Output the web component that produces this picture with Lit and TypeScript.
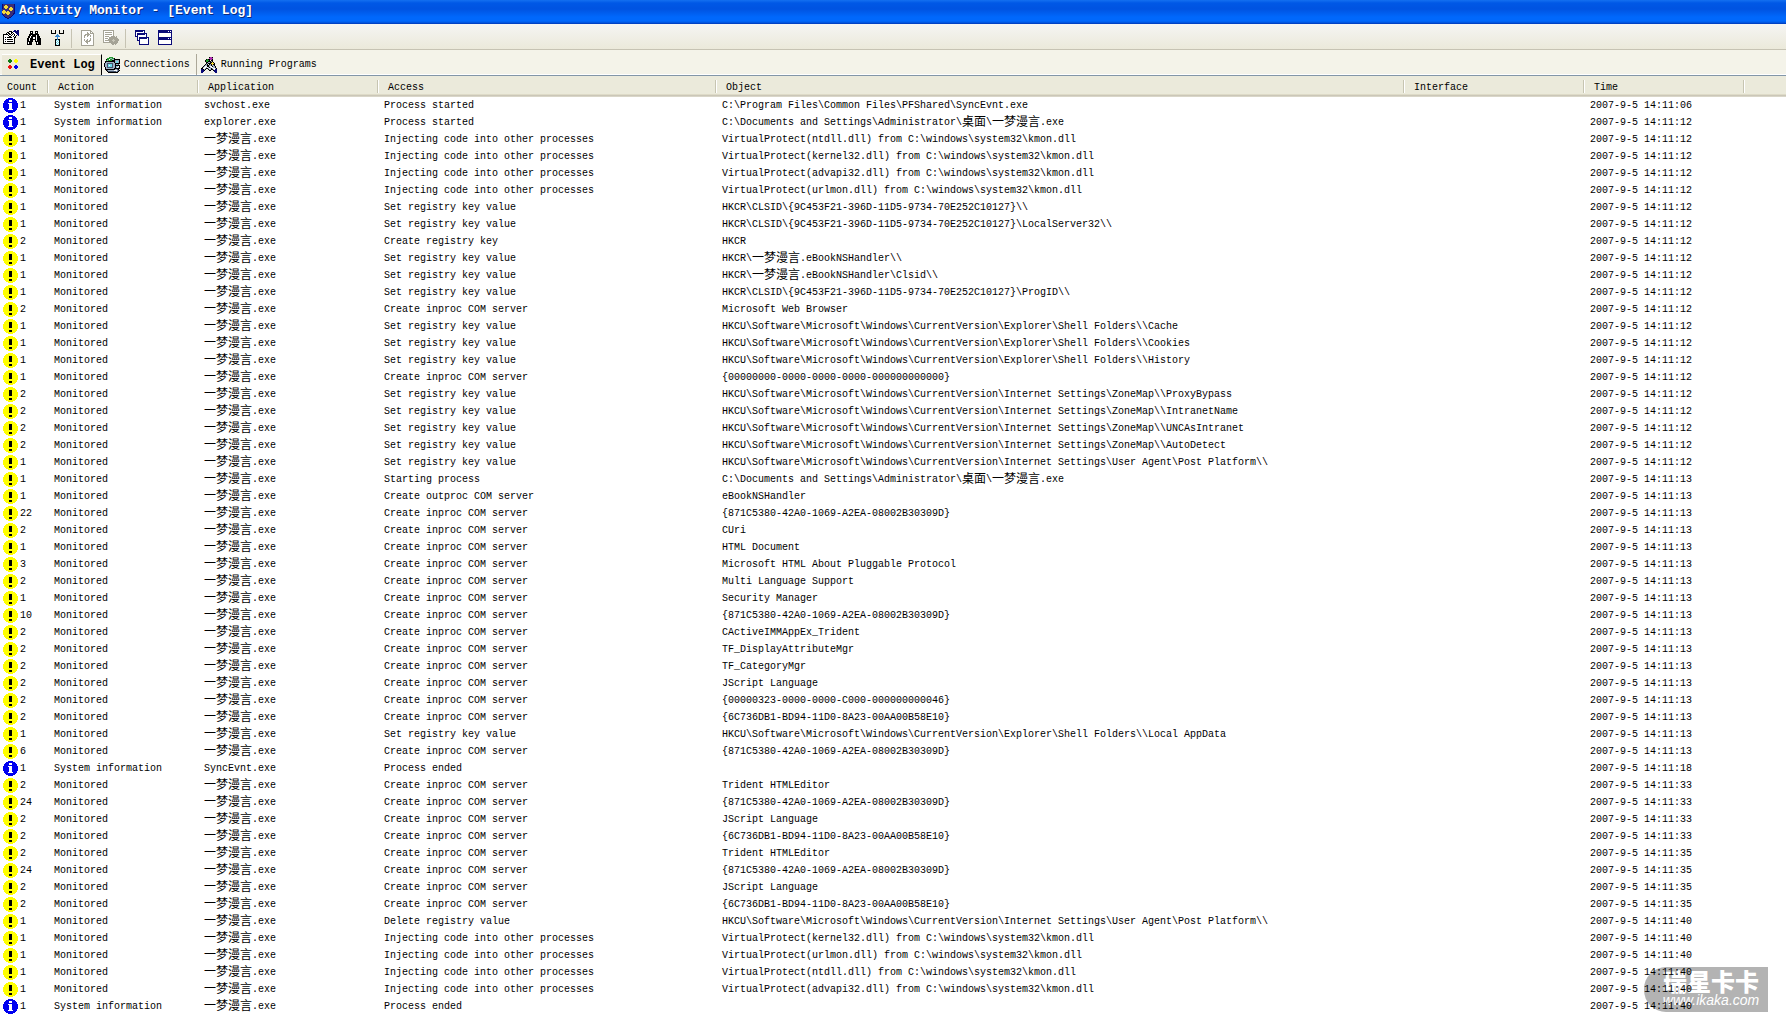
import { LitElement, html, svg, css } from "lit";
import { customElement, property, state } from "lit/decorators.js";

const PALETTE: Record<string, string> = {
  K: "#000000",
  N: "#0a0a78",
  B: "#3a8ad0",
  C: "#6fdcec",
  W: "#ffffff",
  G: "#a5a396",
  L: "#c9c7ba",
  Y: "#f4d838",
  P: "#3a2e78",
  E: "#1f9a2c",
  M: "#b02fb0",
  S: "#9fb0c4",
  D: "#44546c",
  R: "#f01010",
  U: "#0000f0",
  A: "#ffff00",
  F: "#0e7a12",
};

const ICONS: Record<string, string[]> = {
  shield: [
    "................",
    ".NPPPPPPPPPPPN..",
    ".NPPYYPPPPPPPN..",
    ".NPYYYYPPPPPPN..",
    ".NPYYYYPPYYPPN..",
    ".NPPYYPPYYYYPN..",
    ".PPPPPPPYYYYPN..",
    ".PYYPPPPPYYPPN..",
    ".YYYYPYYPPPPPN..",
    ".YYYYYYYYPPPPN..",
    ".PYYPYYYYPPPNN..",
    ".NPPPPYYPPPPN...",
    "..NPPPPPPPPN....",
    "...NPPPPPPN.....",
    "....NNPPNN......",
    "......NN........",
  ],
  properties: [
    "...........NN.NN",
    "......KKK.NNNNNN",
    "....KKWWKKWWNNNN",
    "...KWKKWKWKWWNNN",
    "KKKKKWKKWKWKWWNN",
    "KWWWWKWWKWWKWK.N",
    "KWWWWWKKWWKWK...",
    "KWKWKKKKKWWKK...",
    "KWWWWWWWWWWK....",
    "KWKWKKKKKKWK....",
    "KWWWWWWWWWWK....",
    "KWKWKKKKKKWK....",
    "KWWWWWWWWWWK....",
    "KKKKKKKKKKKK....",
    "................",
    "................",
  ],
  find: [
    "................",
    "....KKK..KKK....",
    "....KWK..KWK....",
    "....KKK..KKK....",
    "...KKKKKKKKKK...",
    "...KKWKKKKWKK...",
    "..KKWKKKKKWKKK..",
    "..KKWKKWWKWKKK..",
    ".KKWKKKWWKWKKKK.",
    ".KKWKKKKKKWKKKK.",
    ".KKWKKK..KWKKKK.",
    ".KKKKKK..KKKKKK.",
    ".KWKKK....KWKKK.",
    ".KWKKK....KWKKK.",
    ".KKKKK....KKKKK.",
    "................",
  ],
  network: [
    "..K...K...K...K.",
    "..K...K...K...K.",
    "..K...K...K...K.",
    "..KKKKK...KKKKK.",
    "........B.......",
    ".......BBB......",
    "......BBBBB.....",
    "........B.......",
    "........B.......",
    "......KKBKK.....",
    "......KCWCK.....",
    "......KWCWK.....",
    "......KCWCK.....",
    "......KWCWK.....",
    "......KCWCK.....",
    "......KKKKK.....",
  ],
  refresh: [
    ".GGGGGGGGGG.....",
    ".GWWWWWWWWGG....",
    ".GWWWWWGWWGWG...",
    ".GWWWWWGGWGGGG..",
    ".GWWWGGGGGWWWG..",
    ".GWWGGWGGWGWWG..",
    ".GWWGWWGWWGWWG..",
    ".GWWGWWWWWWWWG..",
    ".GWWWWWWWWGWWG..",
    ".GWWGWWGWWGWWG..",
    ".GWWGWGGWGGWWG..",
    ".GWWWGGGGGWWWG..",
    ".GWWWWGGWWWWWG..",
    ".GWWWWWGWWWWWG..",
    ".GWWWWWWWWWWWG..",
    ".GGGGGGGGGGGGG..",
  ],
  filter: [
    "GGGGGGGGGGG.....",
    "GWWWWWWWWWG.....",
    "GWGGGGGGGWG.....",
    "GWWWWWWWWWG.....",
    "GWGGGGGGGWG.....",
    "GWWWWWWWWWG.....",
    "GWGGGGWWGGGG.G..",
    "GWWWWWGGGGGGGG..",
    "GWGGGWGGGGGGGGG.",
    "GWWWWGGGGGLGGGGG",
    "GWGGGGGGGLLLGGGG",
    "GWWWWWGGGGLGGGG.",
    "GGGGGGGGGGGGGGG.",
    "........GGGGGG..",
    ".........GG.G...",
    "................",
  ],
  cascade: [
    ".NNNNNNNNNN.....",
    ".NNNNNNNNWN.....",
    ".NWWWWWWWWN.....",
    ".NWNNNNNNNNNN...",
    ".NWNNNNNNNNWN...",
    ".NWNWWWWWWWWN...",
    ".NNNWWWWWWWWN...",
    "...NWNNNNNNNNNN.",
    "...NWNNNNNNNNWN.",
    "...NWNWWWWWWWWN.",
    "...NNNWWWWWWWWN.",
    ".....NWWWWWWWWN.",
    ".....NWWWWWWWWN.",
    ".....NWWWWWWWWN.",
    ".....NNNNNNNNNN.",
    "................",
  ],
  tile: [
    ".NNNNNNNNNNNNNN.",
    ".NNNNNNNNNNWNWN.",
    ".NNNNNNNNNNNNNN.",
    ".NWWWWWWWWWWWWN.",
    ".NWWWWWWWWWWWWN.",
    ".NWWWWWWWWWWWWN.",
    ".NWWWWWWWWWWWWN.",
    ".NNNNNNNNNNNNNN.",
    ".NNNNNNNNNNWNWN.",
    ".NNNNNNNNNNNNNN.",
    ".NWWWWWWWWWWWWN.",
    ".NWWWWWWWWWWWWN.",
    ".NWWWWWWWWWWWWN.",
    ".NWWWWWWWWWWWWN.",
    ".NNNNNNNNNNNNNN.",
    "................",
  ],
  dots: [
    "................",
    "................",
    "...FF....AA.....",
    "..FFFF..AAAA....",
    "..FFFF..AAAA....",
    "...FF....AA.....",
    "................",
    "................",
    "...RR....UU.....",
    "..RRRR..UUUU....",
    "..RRRR..UUUU....",
    "...RR....UU.....",
    "................",
    "................",
    "................",
    "................",
  ],
  connections: [
    ".....EEEE.......",
    "...EEESSEEK.....",
    "..KEEWEESSKKKKKK",
    "..ESEEEEKKKSSSSK",
    ".KKKKKKKKKKSCCSK",
    ".KSSSSSSSSKSCCSK",
    "KSSDDDDDDSSKKKKK",
    "KSSDCCCCDSSKSSD.",
    "KSSDCWCCDSSKKKKK",
    "KSSDCCCCDSSKCSWK",
    ".KSDDDDDDSSKSWSK",
    ".KSSSSSSSSKKKKKK",
    ".KKKKKKKKKKSSDK.",
    "..KDSSSSSSWWWSDK",
    "...KDDDDDDDDSDK.",
    "....KKKKKKKKKK..",
  ],
  programs: [
    "........KMMK....",
    "........MMMM....",
    ".....KEKKMMK....",
    "....KEEEK.KK....",
    "....KEEKKKSK....",
    ".....KKSSKKYK...",
    ".....KSKKKYYYK..",
    "....KSK.KSKYKK..",
    "...KSSKKSSKSSK..",
    "..KSWWKKSWWKSSK.",
    ".KSWWSWSKSWWSSK.",
    "KKWWSKKSWSKSWWSK",
    "NNKSK..KSSKKSWNN",
    "NNNK....KK..KNNN",
    "NNN..........NNN",
    "NN............NN",
  ],
  info: [
    ".....UUUUU......",
    "...UUUUUUUUU....",
    "..UUUUWWWUUUU...",
    ".UUUUUWWWUUUUU..",
    ".UUUUUUUUUUUUU..",
    "UUUUUWWWWUUUUUU.",
    "UUUUUUWWWUUUUUU.",
    "UUUUUUWWWUUUUUU.",
    "UUUUUUWWWUUUUUU.",
    "UUUUUUWWWUUUUUU.",
    ".UUUUUWWWUUUUU..",
    ".UUUUWWWWWUUUU..",
    "..UUUUUUUUUUU...",
    "...UUUUUUUUU....",
    ".....UUUUU......",
    "................",
  ],
  warning: [
    ".....AAAAA......",
    "...AAAAAAAAA....",
    "..AAAAAAAAAAA...",
    ".AAAAAKKKAAAAA..",
    ".AAAAAKKKAAAAA..",
    "AAAAAAKKKAAAAAA.",
    "AAAAAAKKKAAAAAA.",
    "AAAAAAKKKAAAAAA.",
    "AAAAAAKKKAAAAAA.",
    "AAAAAAAAAAAAAAA.",
    ".AAAAAAAAAAAAA..",
    ".AAAAAKKKAAAAA..",
    "..AAAAKKKAAAA...",
    "...AAAAAAAAA....",
    ".....AAAAA......",
    "................",
  ],
};

/** Merges each horizontal run of one colour into a single path segment. */
function iconPaths(rows: string[]): [string, string][] {
  const paths = new Map<string, string>();
  rows.forEach((row, y) => {
    for (const run of row.matchAll(/([A-Z])\1*/g)) {
      const w = run[0].length;
      paths.set(run[1], `${paths.get(run[1]) ?? ""}M${run.index} ${y}h${w}v1h-${w}z`);
    }
  });
  return [...paths].map(([key, d]) => [PALETTE[key], d]);
}

const ICON_PATHS = Object.fromEntries(
  Object.entries(ICONS).map(([name, rows]) => [name, iconPaths(rows)]),
);

@customElement("pixel-icon")
class PixelIcon extends LitElement {
  @property() name = "";

  static styles = css`
    :host {
      display: block;
      flex: none;
      width: 16px;
      height: 16px;
    }
    .art {
      display: block;
      width: 16px;
      height: 16px;
    }
  `;

  render() {
    return html`<svg class="art" viewBox="0 0 16 16" shape-rendering="crispEdges" aria-hidden="true">
      ${(ICON_PATHS[this.name] ?? []).map(([fill, d]) => svg`<path fill=${fill} d=${d}></path>`)}
    </svg>`;
  }
}

interface Row {
  count: number;
  action: string;
  app: string;
  access: string;
  object: string;
  time: string;
}

const EBOOK = "一梦漫言.exe";
const INJECT = "Injecting code into other processes";
const SET = "Set registry key value";
const COM = "Create inproc COM server";
const KMON = "from C:\\windows\\system32\\kmon.dll";
const CURRENT = "HKCU\\Software\\Microsoft\\Windows\\CurrentVersion";
const FOLDERS = `${CURRENT}\\Explorer\\Shell Folders\\\\`;
const INTERNET = `${CURRENT}\\Internet Settings\\`;
const CLSID = "HKCR\\CLSID\\{9C453F21-396D-11D5-9734-70E252C10127}";
const SHELL_ID = "{871C5380-42A0-1069-A2EA-08002B30309D}";
const STREAM_ID = "{6C736DB1-BD94-11D0-8A23-00AA00B58E10}";
const DESKTOP = "C:\\Documents and Settings\\Administrator\\桌面\\一梦漫言.exe";

const seen = (count: number, access: string, object: string, second: string): Row => ({
  count,
  action: "Monitored",
  app: EBOOK,
  access,
  object,
  time: `2007-9-5 14:11:${second}`,
});

const system = (app: string, access: string, object: string, second: string): Row => ({
  count: 1,
  action: "System information",
  app,
  access,
  object,
  time: `2007-9-5 14:11:${second}`,
});

const ROWS: Row[] = [
  system("svchost.exe", "Process started", "C:\\Program Files\\Common Files\\PFShared\\SyncEvnt.exe", "06"),
  system("explorer.exe", "Process started", DESKTOP, "12"),
  seen(1, INJECT, `VirtualProtect(ntdll.dll) ${KMON}`, "12"),
  seen(1, INJECT, `VirtualProtect(kernel32.dll) ${KMON}`, "12"),
  seen(1, INJECT, `VirtualProtect(advapi32.dll) ${KMON}`, "12"),
  seen(1, INJECT, `VirtualProtect(urlmon.dll) ${KMON}`, "12"),
  seen(1, SET, `${CLSID}\\\\`, "12"),
  seen(1, SET, `${CLSID}\\LocalServer32\\\\`, "12"),
  seen(2, "Create registry key", "HKCR", "12"),
  seen(1, SET, "HKCR\\一梦漫言.eBookNSHandler\\\\", "12"),
  seen(1, SET, "HKCR\\一梦漫言.eBookNSHandler\\Clsid\\\\", "12"),
  seen(1, SET, `${CLSID}\\ProgID\\\\`, "12"),
  seen(2, COM, "Microsoft Web Browser", "12"),
  seen(1, SET, `${FOLDERS}Cache`, "12"),
  seen(1, SET, `${FOLDERS}Cookies`, "12"),
  seen(1, SET, `${FOLDERS}History`, "12"),
  seen(1, COM, "{00000000-0000-0000-0000-000000000000}", "12"),
  seen(2, SET, `${INTERNET}ZoneMap\\\\ProxyBypass`, "12"),
  seen(2, SET, `${INTERNET}ZoneMap\\\\IntranetName`, "12"),
  seen(2, SET, `${INTERNET}ZoneMap\\\\UNCAsIntranet`, "12"),
  seen(2, SET, `${INTERNET}ZoneMap\\\\AutoDetect`, "12"),
  seen(1, SET, `${INTERNET}User Agent\\Post Platform\\\\`, "12"),
  seen(1, "Starting process", DESKTOP, "13"),
  seen(1, "Create outproc COM server", "eBookNSHandler", "13"),
  seen(22, COM, SHELL_ID, "13"),
  seen(2, COM, "CUri", "13"),
  seen(1, COM, "HTML Document", "13"),
  seen(3, COM, "Microsoft HTML About Pluggable Protocol", "13"),
  seen(2, COM, "Multi Language Support", "13"),
  seen(1, COM, "Security Manager", "13"),
  seen(10, COM, SHELL_ID, "13"),
  seen(2, COM, "CActiveIMMAppEx_Trident", "13"),
  seen(2, COM, "TF_DisplayAttributeMgr", "13"),
  seen(2, COM, "TF_CategoryMgr", "13"),
  seen(2, COM, "JScript Language", "13"),
  seen(2, COM, "{00000323-0000-0000-C000-000000000046}", "13"),
  seen(2, COM, STREAM_ID, "13"),
  seen(1, SET, `${FOLDERS}Local AppData`, "13"),
  seen(6, COM, SHELL_ID, "13"),
  system("SyncEvnt.exe", "Process ended", "", "18"),
  seen(2, COM, "Trident HTMLEditor", "33"),
  seen(24, COM, SHELL_ID, "33"),
  seen(2, COM, "JScript Language", "33"),
  seen(2, COM, STREAM_ID, "33"),
  seen(2, COM, "Trident HTMLEditor", "35"),
  seen(24, COM, SHELL_ID, "35"),
  seen(2, COM, "JScript Language", "35"),
  seen(2, COM, STREAM_ID, "35"),
  seen(1, "Delete registry value", `${INTERNET}User Agent\\Post Platform\\\\`, "40"),
  seen(1, INJECT, `VirtualProtect(kernel32.dll) ${KMON}`, "40"),
  seen(1, INJECT, `VirtualProtect(urlmon.dll) ${KMON}`, "40"),
  seen(1, INJECT, `VirtualProtect(ntdll.dll) ${KMON}`, "40"),
  seen(1, INJECT, `VirtualProtect(advapi32.dll) ${KMON}`, "40"),
  system(EBOOK, "Process ended", "", "40"),
];

/** Chinese runs are set two Latin cells wide. */
const mixed = (text: string) =>
  text
    .split(/([\u4e00-\u9fff]+)/)
    .filter(Boolean)
    .map((part) => (/^[\u4e00-\u9fff]/.test(part) ? html`<span class="han">${part}</span>` : part));

@customElement("event-table")
class EventTable extends LitElement {
  static styles = css`
    :host {
      display: block;
      overflow-x: auto;
      overflow-y: hidden;
    }
    .log {
      width: 100%;
      border-collapse: separate;
      border-spacing: 0;
      table-layout: fixed;
      font: 10px/16px "Liberation Mono", "Noto Sans CJK SC", monospace;
      color: #000;
    }
    .c-count { width: 49px; }
    .c-action { width: 150px; }
    .c-app { width: 180px; }
    .c-access { width: 338px; }
    .c-object { width: 688px; }
    .c-iface { width: 180px; }
    .c-time { width: 160px; }
    .head {
      box-sizing: border-box;
      height: 21px;
      padding: 0;
      font-weight: 400;
      text-align: left;
      background: linear-gradient(#ebeadb 0 18px, #dedbc8 18px 19px, #cbc7b8 19px 20px, #d9d6c8 20px);
    }
    .label {
      display: block;
      height: 13px;
      padding-left: 9px;
      border-right: 1px solid #fff;
      box-shadow: inset -1px 0 #c7c5b2;
      line-height: 16px;
    }
    .head:first-child .label { padding-left: 7px; }
    .head:last-child .label {
      border: 0;
      box-shadow: none;
    }
    .cell {
      box-sizing: border-box;
      height: 17px;
      padding: 1px 0 0 5px;
      white-space: nowrap;
      overflow: hidden;
      vertical-align: top;
    }
    .cell:first-child { padding-left: 3px; }
    .tally {
      display: flex;
      align-items: center;
      gap: 1px;
      height: 16px;
    }
    .han {
      font-size: 12px;
      line-height: 12px;
      vertical-align: -1px;
    }
  `;

  render() {
    const heads = ["Count", "Action", "Application", "Access", "Object", "Interface", "Time"];
    return html`<table class="log">
      <colgroup>
        <col class="c-count" /><col class="c-action" /><col class="c-app" /><col class="c-access" />
        <col class="c-object" /><col class="c-iface" /><col class="c-time" /><col />
      </colgroup>
      <thead>
        <tr>
          ${heads.map((h) => html`<th class="head" scope="col"><span class="label">${h}</span></th>`)}
          <td class="head"><span class="label"></span></td>
        </tr>
      </thead>
      <tbody>
        ${ROWS.map(
          (r) => html`<tr>
            <td class="cell">
              <div class="tally">
                <pixel-icon name=${r.action === "Monitored" ? "warning" : "info"}></pixel-icon>${r.count}
              </div>
            </td>
            <td class="cell">${r.action}</td>
            <td class="cell">${mixed(r.app)}</td>
            <td class="cell">${r.access}</td>
            <td class="cell">${mixed(r.object)}</td>
            <td class="cell"></td>
            <td class="cell">${r.time}</td>
            <td class="cell"></td>
          </tr>`,
        )}
      </tbody>
    </table>`;
  }
}

@customElement("app-root")
class AppRoot extends LitElement {
  @state() private tab = "Event Log";

  static styles = css`
    :host {
      display: block;
      position: relative;
      min-height: 100vh;
      background: #fff;
      font: 10px/16px "Liberation Mono", "Noto Sans CJK SC", monospace;
      color: #000;
    }
    .title {
      display: flex;
      align-items: center;
      gap: 2px;
      box-sizing: border-box;
      height: 24px;
      padding: 0 1px 1px;
      border-bottom: 1px solid #0041c4;
      background: linear-gradient(#1470f0 0, #0058e6 3px, #0053e1 9px, #0068fc 17px, #0068fc 21px, #0050d8 23px);
    }
    .caption {
      margin: 0;
      font-size: 13px;
      line-height: 20px;
      font-weight: 700;
      color: #fff;
      text-shadow: 1px 1px #0a2a80;
    }
    .toolbar {
      display: flex;
      align-items: center;
      box-sizing: border-box;
      height: 26px;
      padding-top: 3px;
      border-bottom: 1px solid #c6c3b3;
      background: linear-gradient(#f5f5f3, #ebe9da);
    }
    .tool {
      display: flex;
      padding: 3px;
      width: 23px;
      border: 0;
      background: none;
      box-sizing: border-box;
    }
    .rule {
      width: 1px;
      height: 19px;
      margin: 0 5px 0 2px;
      background: #c6c3b3;
    }
    .tabs {
      display: flex;
      align-items: center;
      box-sizing: border-box;
      height: 26px;
      padding: 3px 2px 0;
      border-bottom: 1px solid #8296a8;
      background: #f4f3e9;
      box-shadow: inset 0 -1px #fff;
    }
    .tab {
      display: flex;
      align-items: center;
      gap: 4px;
      box-sizing: border-box;
      height: 21px;
      margin: 0;
      padding: 1px 6px 0 2px;
      border: 0;
      border-right: 1px solid #aca899;
      background: none;
      font: inherit;
      color: inherit;
    }
    .tab:last-child {
      padding-left: 4px;
      border-color: transparent;
    }
    .tab.on {
      gap: 8px;
      padding: 0 6px 0 4px;
      background: #ece9d8;
      border-top: 1px solid #fff;
      border-right: 1px solid #000;
      font-size: 12px;
      font-weight: 700;
    }
    .list {
      position: relative;
      z-index: 1;
    }
    .mark {
      position: absolute;
      right: 18px;
      top: 967px;
      display: flex;
      flex-direction: column;
      align-items: center;
      box-sizing: border-box;
      width: 124px;
      height: 45px;
      padding-left: 10px;
      border-radius: 22px 0 0 22px;
      background: #b3b3b3;
      color: #fff;
    }
    .brand {
      font: 900 24px/27px "Noto Sans CJK SC", sans-serif;
    }
    .site {
      font: italic 14px/12px "Liberation Sans", sans-serif;
    }
  `;

  private tool(icon: string, label: string, disabled = false) {
    return html`<button class="tool" type="button" aria-label=${label} ?disabled=${disabled}>
      <pixel-icon name=${icon}></pixel-icon>
    </button>`;
  }

  private tabButton(icon: string, label: string) {
    const on = this.tab === label;
    return html`<button
      class=${on ? "tab on" : "tab"}
      type="button"
      role="tab"
      aria-selected=${on ? "true" : "false"}
      @click=${() => (this.tab = label)}
    >
      <pixel-icon name=${icon}></pixel-icon>${label}
    </button>`;
  }

  render() {
    return html`
      <header class="title">
        <pixel-icon name="shield"></pixel-icon>
        <h1 class="caption">Activity Monitor - [Event Log]</h1>
      </header>
      <div class="toolbar" role="toolbar">
        ${this.tool("properties", "Properties")} ${this.tool("find", "Find")} ${this.tool("network", "Network")}
        <span class="rule"></span>
        ${this.tool("refresh", "Refresh", true)} ${this.tool("filter", "Log options", true)}
        <span class="rule"></span>
        ${this.tool("cascade", "Cascade")} ${this.tool("tile", "Tile")}
      </div>
      <nav class="tabs" role="tablist">
        ${this.tabButton("dots", "Event Log")} ${this.tabButton("connections", "Connections")}
        ${this.tabButton("programs", "Running Programs")}
      </nav>
      <event-table class="list"></event-table>
      <div class="mark">
        <span class="brand">瑞星卡卡</span>
        <span class="site">www.ikaka.com</span>
      </div>
    `;
  }
}
